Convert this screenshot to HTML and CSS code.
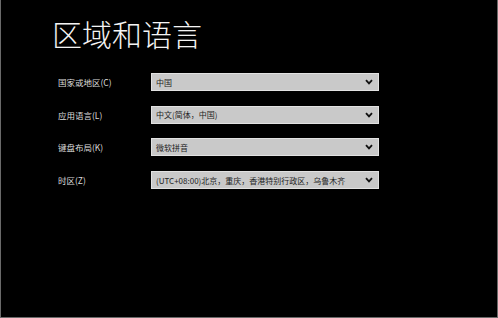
FILE: index.html
```html
<!DOCTYPE html>
<html>
	<head>
		<meta charset="UTF-8">
		<title>区域和语言</title>
		<link rel="stylesheet" href="styles.css">
	</head>
	<body>
		<div class="screen">
			<h1 class="title">区域和语言</h1>
			<div class="form">
				<div class="row">
					<span class="label">国家或地区(C)</span>
					<div class="select">
						<span>中国</span>
						<svg class="arrow" width="8" height="6" viewBox="0 0 8 6"><path d="M1 1.2 L4 4.4 L7 1.2" fill="none" stroke="#111" stroke-width="1.8"/></svg>
					</div>
				</div>
				<div class="row">
					<span class="label">应用语言(L)</span>
					<div class="select">
						<span>中文(简体，中国)</span>
						<svg class="arrow" width="8" height="6" viewBox="0 0 8 6"><path d="M1 1.2 L4 4.4 L7 1.2" fill="none" stroke="#111" stroke-width="1.8"/></svg>
					</div>
				</div>
				<div class="row">
					<span class="label">键盘布局(K)</span>
					<div class="select">
						<span>微软拼音</span>
						<svg class="arrow" width="8" height="6" viewBox="0 0 8 6"><path d="M1 1.2 L4 4.4 L7 1.2" fill="none" stroke="#111" stroke-width="1.8"/></svg>
					</div>
				</div>
				<div class="row">
					<span class="label">时区(Z)</span>
					<div class="select">
						<span>(UTC+08:00)北京，重庆，香港特别行政区，乌鲁木齐</span>
						<svg class="arrow" width="8" height="6" viewBox="0 0 8 6"><path d="M1 1.2 L4 4.4 L7 1.2" fill="none" stroke="#111" stroke-width="1.8"/></svg>
					</div>
				</div>
			</div>
		</div>
	</body>
</html>
```

FILE: styles.css
```css
*{
	margin: 0;
	padding: 0;
	box-sizing: border-box;
}
body{
	width: 498px;
	height: 318px;
	background: #000;
	overflow: hidden;
	font-family: "Noto Sans CJK SC", "Liberation Sans", sans-serif;
}
.screen{
	height: 318px;
	border-left: 1px solid #6a6a6a;
	border-right: 1px solid #6a6a6a;
	border-bottom: 1px solid #6a6a6a;
	padding: 13px 0 0 51px;
}
.title{
	font-size: 30px;
	font-weight: 300;
	color: #f4f4f4;
	line-height: 40px;
}
.form{
	display: flex;
	flex-direction: column;
	gap: 14.7px;
	padding-left: 6px;
	margin-top: 20px;
}
.row{
	display: flex;
	align-items: center;
	height: 18px;
}
.label{
	width: 93px;
	font-size: 8.5px;
	color: #dcdcdc;
}
.select{
	width: 228px;
	height: 18px;
	background: #c9c9c9;
	border: 1px solid #e2e2e2;
	display: flex;
	align-items: center;
	justify-content: space-between;
	padding: 0 5px 0 4px;
	font-size: 8px;
	color: #1e1e1e;
	white-space: nowrap;
}
.arrow{
	display: block;
	flex-shrink: 0;
}
```
